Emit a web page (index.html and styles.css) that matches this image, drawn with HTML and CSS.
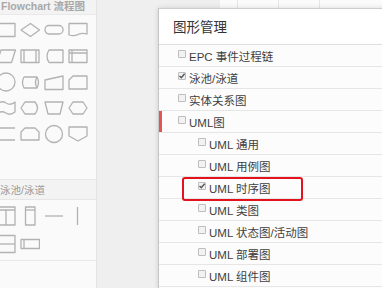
FILE: index.html
```html
<!DOCTYPE html>
<html lang="zh-CN">
<head>
    <meta charset="UTF-8">
    <title>图形管理</title>
    <link rel="stylesheet" href="styles.css">
</head>
<body>
    <aside class="shapes">
        <div class="group-title flow-title">Flowchart 流程图</div>
        <div class="shape-grid flow">
            <svg viewBox="0 0 20 20"><rect x="1" y="3.5" width="18" height="13"/></svg>
            <svg viewBox="0 0 20 20"><polygon points="10.5,3.5 19.5,10 10.5,16.5 1,10"/></svg>
            <svg viewBox="0 0 20 20"><rect x="1" y="5.5" width="18" height="8.5" rx="4"/></svg>
            <svg viewBox="0 0 20 20"><path d="M1 3.5H19V14Q14 12.5 10 14.5Q6 16.5 1 15Z"/></svg>

            <svg viewBox="0 0 20 20"><polygon points="5,4 19.5,4 15.5,16.5 1,16.5"/></svg>
            <svg viewBox="0 0 20 20"><rect x="1" y="4" width="18" height="12.5"/><path d="M4 4V16.5M16 4V16.5"/></svg>
            <svg viewBox="0 0 20 20"><path d="M19 4H5Q1 10.2 5 16.5H19Z"/></svg>
            <svg viewBox="0 0 20 20"><rect x="1" y="4" width="18" height="12.5"/><path d="M1 7H19M4 4V16.5"/></svg>

            <svg viewBox="0 0 20 20"><circle cx="10" cy="10" r="9"/></svg>
            <svg viewBox="0 0 20 20"><path d="M4 5H17Q20 10.5 17 16H4Q1 10.5 4 5Z"/><path d="M17 5Q14 10.5 17 16"/></svg>
            <svg viewBox="0 0 20 20"><polygon points="1,8 19,4 19,17.5 1,17.5"/></svg>
            <svg viewBox="0 0 20 20"><path d="M5 4H19V17H1V8Z"/></svg>

            <svg viewBox="0 0 20 20"><path d="M1 6Q6 2 10 5Q15 8 19 4V14Q14 18 10 15Q5 12 1 16Z"/></svg>
            <svg viewBox="0 0 20 20"><path d="M5 4H15Q20 10 15 16H5L1 10Z"/></svg>
            <svg viewBox="0 0 20 20"><polygon points="1,4 19,4 16,16 4,16"/></svg>
            <svg viewBox="0 0 20 20"><polygon points="5,4 15,4 19,10 15,16 5,16 1,10"/></svg>

            <svg viewBox="0 0 20 20"><path d="M19 4H1V16H19"/></svg>
            <svg viewBox="0 0 20 20"><path d="M5 4H15L19 8V16H1V8Z"/></svg>
            <svg viewBox="0 0 20 20"><circle cx="10" cy="10" r="8.5"/></svg>
            <svg viewBox="0 0 20 20"><path d="M1 3H19V12L10 17L1 12Z"/></svg>
        </div>

        <div class="group-title lane-title">泳池/泳道</div>
        <div class="shape-grid lanes">
            <svg viewBox="0 0 20 20"><rect x="1" y="1" width="18" height="18"/><path d="M1 4H19M10 4V19"/></svg>
            <svg viewBox="0 0 20 20"><rect x="5.5" y="1" width="9.5" height="18"/><path d="M5.5 4H15"/></svg>
            <svg viewBox="0 0 20 20"><path d="M1 10H19"/></svg>
            <svg viewBox="0 0 20 20"><path d="M9.5 1V19"/></svg>

            <svg viewBox="0 0 20 20"><rect x="1" y="1.5" width="18" height="17"/><path d="M1 10H19"/></svg>
            <svg viewBox="0 0 20 20"><rect x="1" y="5.5" width="18.5" height="9"/><path d="M4 5.5V14.5"/></svg>
        </div>
    </aside>

    <main class="workspace">
        <div class="ruler"></div>
        <div class="stage">
            <section class="dialog">
                <header class="dialog-head">图形管理</header>
                <ul class="type-list">
                    <li class="type-row"><span class="cb"></span>EPC 事件过程链</li>
                    <li class="type-row"><span class="cb checked"><svg viewBox="0 0 8 8"><path d="M1.5 4L3.3 5.8L6.6 1.8"/></svg></span>泳池/泳道</li>
                    <li class="type-row"><span class="cb"></span>实体关系图</li>
                    <li class="type-row active"><span class="cb"></span>UML图</li>
                    <li class="type-row sub"><span class="cb"></span>UML 通用</li>
                    <li class="type-row sub"><span class="cb"></span>UML 用例图</li>
                    <li class="type-row sub">
                        <span class="cb checked"><svg viewBox="0 0 8 8"><path d="M1.5 4L3.3 5.8L6.6 1.8"/></svg></span>UML 时序图
                        <span class="highlight"></span>
                    </li>
                    <li class="type-row sub"><span class="cb"></span>UML 类图</li>
                    <li class="type-row sub"><span class="cb"></span>UML 状态图/活动图</li>
                    <li class="type-row sub"><span class="cb"></span>UML 部署图</li>
                    <li class="type-row sub"><span class="cb"></span>UML 组件图</li>
                </ul>
            </section>
        </div>
    </main>
</body>
</html>
```

FILE: styles.css
```css
/* Base */
body {
    display: flex;
    height: 288px;
    margin: 0;
    overflow: hidden;
    background-color: #efefef;
    font-family: "Liberation Sans Narrow", "Liberation Sans", "Noto Sans CJK SC", sans-serif;
}

/* Shape library on the left */
.shapes {
    flex: 0 0 97px;
    box-sizing: border-box;
    height: 100%;
    overflow: hidden;
    background: #fafafa;
    border-right: 1px solid #e4e4e4;
}
.group-title {
    box-sizing: border-box;
    padding-left: 1px;
    background: #f3f3f3;
    color: #a8a8a8;
    font-family: "Liberation Sans", "Noto Sans CJK SC", sans-serif;
    font-size: 10.5px;
    white-space: nowrap;
}
.flow-title {
    height: 15px;
    line-height: 12px;
    font-weight: bold;
    border-bottom: 1px solid #e9e9e9;
}
.lane-title {
    height: 21px;
    line-height: 21px;
    margin-top: 35px;
    padding-left: 0;
    color: #9a9a9a;
    border-top: 1px solid #e6e6e6;
    border-bottom: 1px solid #e6e6e6;
}
.shape-grid {
    display: grid;
    grid-template-columns: repeat(4, 20px);
    column-gap: 4px;
    margin-left: -4px;
}
.shape-grid svg {
    width: 20px;
    height: 20px;
    fill: none;
    stroke: #b2b2b2;
    stroke-width: 1.3;
    stroke-linejoin: round;
}
.flow {
    row-gap: 6px;
    padding-top: 5px;
}
.lanes {
    row-gap: 8px;
    padding: 6px 0 6px;
    border-bottom: 1px solid #e8e8e8;
}

/* Workspace */
.workspace {
    flex: 1;
    display: flex;
    flex-direction: column;
    min-width: 0;
}
.ruler {
    height: 8px;
    flex: 0 0 8px;
    margin-left: 123px;
    background-color: #fbfbfb;
    background-image: repeating-linear-gradient(to right, transparent 0 40px, #e6e6e6 40px 41px);
    background-position: -23px 0;
}
.stage {
    flex: 1;
    padding-left: 61px;
}
.dialog {
    width: 240px;
    height: 100%;
    background: #fcfcfc;
    border-top: 1px solid #cdcdcd;
    border-left: 1px solid #c6c6c6;
    box-shadow: 0 0 5px rgba(0, 0, 0, 0.14);
}
.dialog-head {
    height: 35px;
    line-height: 35px;
    padding-left: 14px;
    background: #fff;
    border-bottom: 1px solid #dedede;
    color: #333;
    font-family: "Noto Sans CJK SC", sans-serif;
    font-size: 13.5px;
}

/* Diagram type list */
.type-list {
    margin: 0;
    padding: 0;
    list-style: none;
}
.type-row {
    position: relative;
    display: flex;
    align-items: center;
    height: 21px;
    padding-left: 19px;
    border-bottom: 1px solid #e6e6e6;
    color: #3f3f3f;
    font-size: 11.5px;
    white-space: nowrap;
}
.type-row.sub {
    padding-left: 39px;
}
.type-row.active {
    box-shadow: inset 3px 0 #e05555;
}
.cb {
    flex: 0 0 auto;
    box-sizing: border-box;
    width: 8px;
    height: 8px;
    margin: 0 3px 3px 0;
    background: #f2f2f2;
    border: 1px solid #bdbdbd;
    border-radius: 1px;
}
.type-row.sub .cb {
    margin-right: 3px;
}
.cb svg {
    display: block;
    width: 8px;
    height: 8px;
    margin: -1px;
    fill: none;
    stroke: #555;
    stroke-width: 1.4;
}
.highlight {
    position: absolute;
    left: 23px;
    top: 0;
    box-sizing: border-box;
    width: 121px;
    height: 24px;
    border: 2px solid #e3121c;
    border-radius: 3px;
}
```
